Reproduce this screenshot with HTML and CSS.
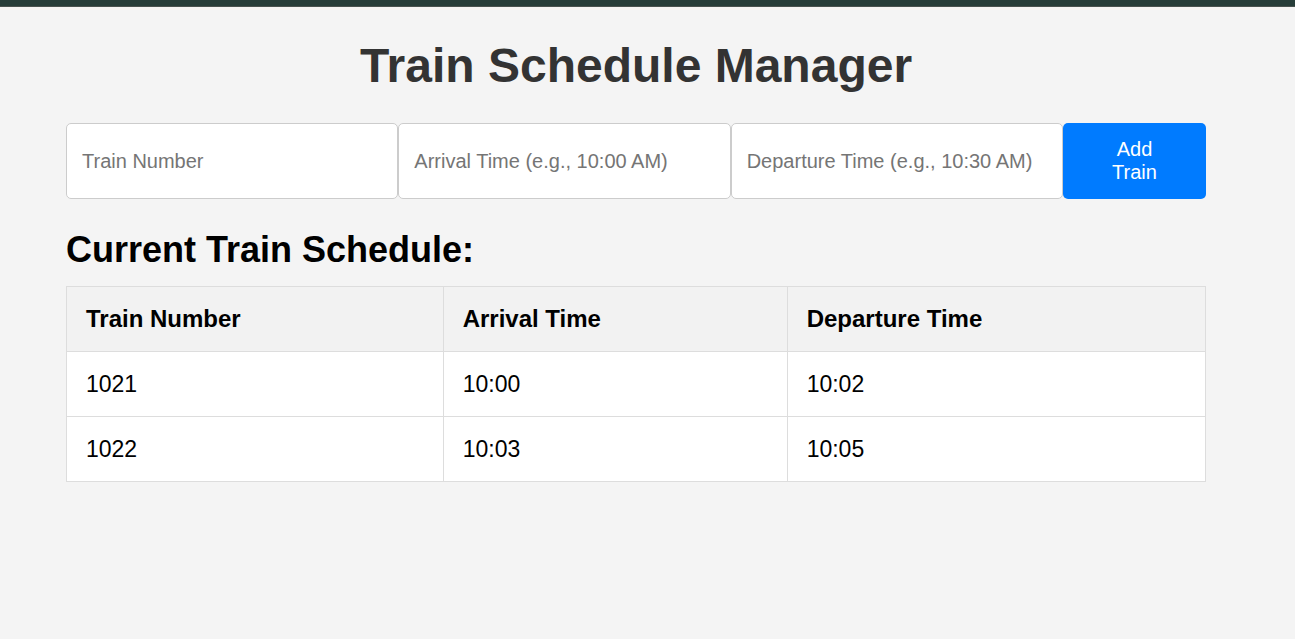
FILE: index.html
```html
<!DOCTYPE html>
<html lang="en">
<head>
<meta charset="utf-8">
<title>Train Schedule Manager</title>
<link rel="stylesheet" href="styles.css">
</head>
<body>
<div class="topbar"></div>
<main class="page">
  <h1 class="title">Train Schedule Manager</h1>
  <form class="add-form">
    <input class="field" type="text" placeholder="Train Number">
    <input class="field" type="text" placeholder="Arrival Time (e.g., 10:00 AM)">
    <input class="field" type="text" placeholder="Departure Time (e.g., 10:30 AM)">
    <button class="add-btn" type="button">Add Train</button>
  </form>
  <h2 class="subtitle">Current Train Schedule:</h2>
  <table class="schedule">
    <thead>
      <tr>
        <th class="col-num">Train Number</th>
        <th class="col-arr">Arrival Time</th>
        <th>Departure Time</th>
      </tr>
    </thead>
    <tbody>
      <tr><td>1021</td><td>10:00</td><td>10:02</td></tr>
      <tr><td>1022</td><td>10:03</td><td>10:05</td></tr>
    </tbody>
  </table>
</main>
</body>
</html>
```

FILE: styles.css
```css
html, body {
  margin: 0;
  padding: 0;
}
body {
  background: #f4f4f4;
  font-family: "Liberation Sans", Arial, sans-serif;
  color: #000;
}
.topbar {
  height: 6px;
  background: #263d39;
  border-bottom: 1px solid #48524f;
}
.page {
  max-width: 1140px;
  margin: 0 89px 0 66px;
  padding-top: 31px;
}
.title {
  margin: 0 0 30px;
  font-size: 48px;
  line-height: 55px;
  font-weight: bold;
  color: #333;
  text-align: center;
}
.add-form {
  display: flex;
  margin: 0 0 30px;
}
.field {
  flex: 1 1 0;
  min-width: 0;
  box-sizing: border-box;
  height: 76px;
  margin: 0;
  padding: 0 15px;
  border: 1px solid #ccc;
  border-radius: 5px;
  background: #fff;
  font-family: "Liberation Sans", Arial, sans-serif;
  font-size: 20px;
  color: #333;
}
.field::placeholder {
  color: #757575;
}
.add-btn {
  flex: 0 0 143px;
  box-sizing: border-box;
  height: 76px;
  margin: 0;
  padding: 0 30px;
  border: none;
  border-radius: 5px;
  background: #007bff;
  color: #fff;
  font-family: "Liberation Sans", Arial, sans-serif;
  font-size: 20px;
  line-height: 23px;
}
.subtitle {
  margin: 0 0 16px;
  font-size: 36px;
  line-height: 41px;
  font-weight: bold;
  color: #000;
}
.schedule {
  width: 100%;
  border-collapse: collapse;
  background: #fff;
  font-size: 23px;
}
.schedule th,
.schedule td {
  border: 1px solid #ddd;
  padding: 20px 19px;
  line-height: 24px;
  text-align: left;
}
.schedule th {
  background: #f2f2f2;
  font-size: 24px;
  font-weight: bold;
}
.col-num {
  width: 33.07%;
}
.col-arr {
  width: 30.2%;
}
```
